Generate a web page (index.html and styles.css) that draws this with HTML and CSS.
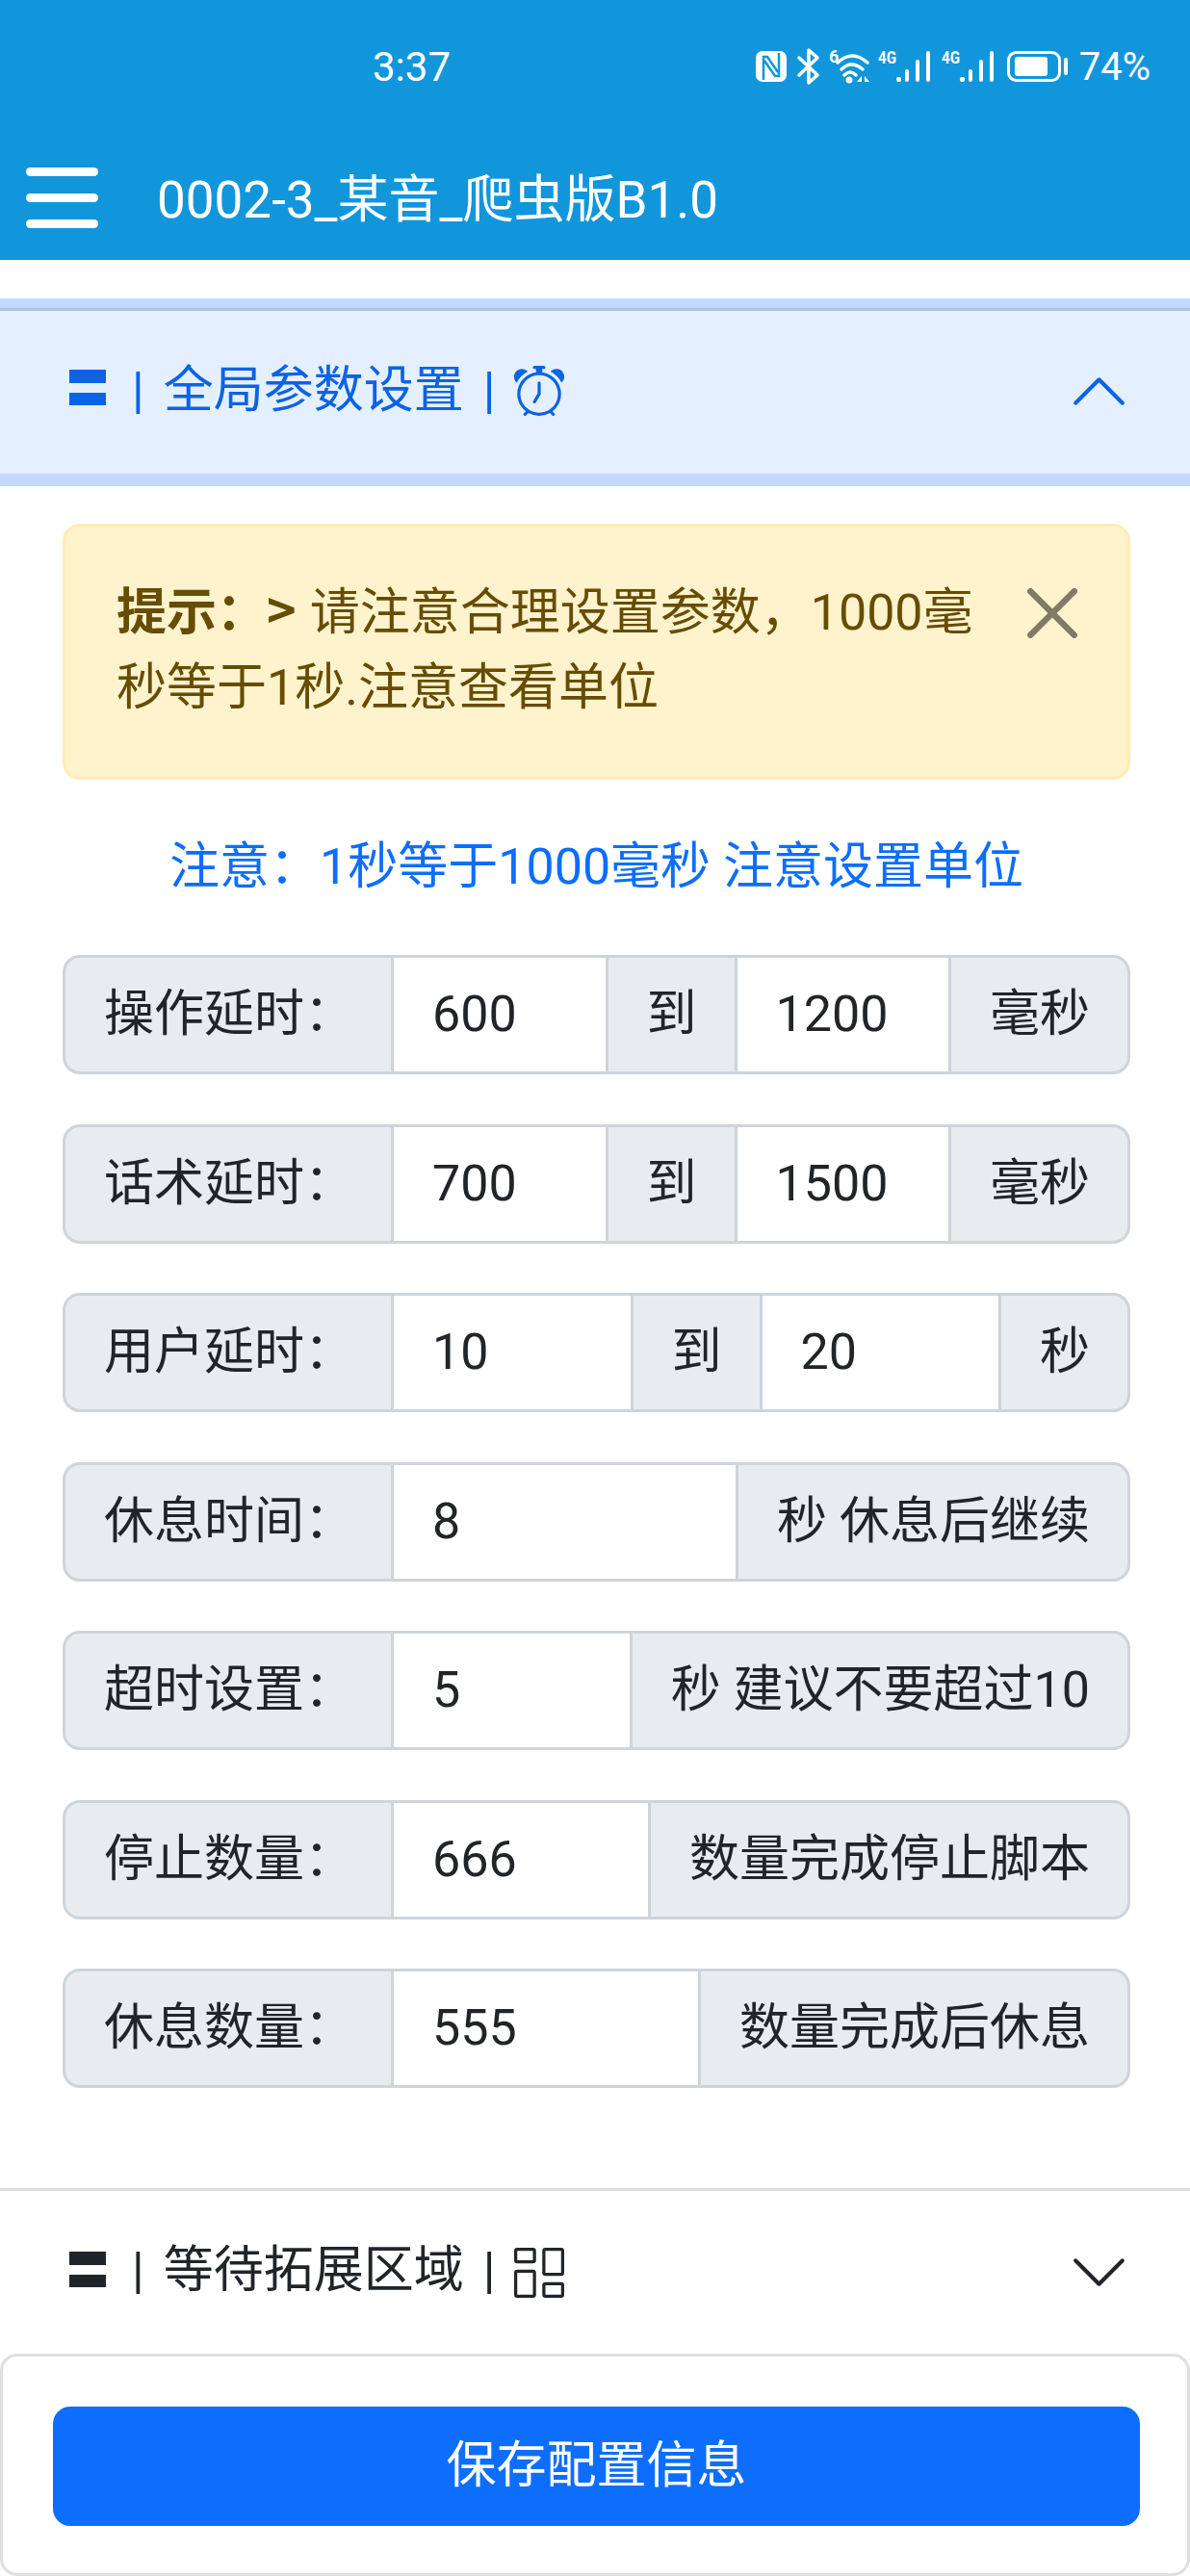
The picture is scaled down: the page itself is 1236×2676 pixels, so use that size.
FILE: index.html
```html
<!doctype html>
<html lang="zh-CN">
<head>
<meta charset="utf-8">
<title>0002-3_某音_爬虫版B1.0</title>
<link rel="stylesheet" href="styles.css">
</head>
<body>
<header class="appbar">
	<div class="statusbar">
		<span class="clock">3:37</span>
		<svg class="status-icons" width="330" height="50" viewBox="0 0 330 50">
			<rect x="4" y="8" width="32" height="32" rx="7" fill="#fff"/>
			<path d="M12 38V14h4l11 16M28 10v24h-4L13 18" fill="none" stroke="#1296db" stroke-width="2.500"/>
			<path d="M49 15l19 18-9 8V7l9 8-19 18" fill="none" stroke="#fff" stroke-width="3.500" stroke-linecap="round" stroke-linejoin="round"/>
			<text x="80" y="20" class="tiny">6</text>
			<g fill="none" stroke="#fff" stroke-width="3.500" stroke-linecap="round">
				<path d="M89 20q15-14 31 0"/>
				<path d="M93 27q10-10 22 0"/>
				<path d="M96 33q6-6 12 0"/>
			</g>
			<circle cx="101" cy="38" r="3.500" fill="#fff"/>
			<path d="M114 34v6h-5zM117 34l5 6h-5z" fill="#fff"/>
			<text x="131" y="21" class="tiny" textLength="19" lengthAdjust="spacingAndGlyphs">4G</text>
			<g fill="#fff">
				<rect x="150" y="35" width="5" height="5" rx="2"/>
				<rect x="159" y="27" width="4" height="13" rx="2"/>
				<rect x="170" y="17" width="4" height="23" rx="2"/>
				<rect x="181" y="8" width="4" height="32" rx="2"/>
			</g>
			<text x="197" y="21" class="tiny" textLength="19" lengthAdjust="spacingAndGlyphs">4G</text>
			<g fill="#fff">
				<rect x="216" y="35" width="5" height="5" rx="2"/>
				<rect x="225" y="27" width="4" height="13" rx="2"/>
				<rect x="236" y="17" width="4" height="23" rx="2"/>
				<rect x="247" y="8" width="4" height="32" rx="2"/>
			</g>
			<rect x="266.500" y="9.500" width="53" height="29" rx="8" fill="none" stroke="#fff" stroke-width="3"/>
			<rect x="273" y="14" width="34" height="20" rx="3" fill="#fff"/>
			<rect x="324" y="15" width="4" height="18" rx="2" fill="#fff"/>
		</svg>
		<span class="battery">74%</span>
	</div>
	<div class="titlebar">
		<div class="burger"><span></span><span></span><span></span></div>
		<span class="title">0002-3_某音_爬虫版B1.0</span>
	</div>
</header>

<section class="acc-head acc-open">
	<svg class="bars" viewBox="0 0 38 37"><rect width="38" height="14"/><rect y="24" width="38" height="13"/></svg>
	<span class="acc-text">|<span class="acc-name">全局参数设置</span>|</span>
	<svg class="bi" viewBox="0 0 16 16" fill="currentColor">
		<path d="M8.500 5.500a.5.5 0 0 0-1 0v3.362l-1.429 2.380a.5.5 0 1 0 .858.515l1.500-2.500A.5.5 0 0 0 8.500 9V5.500z"/>
		<path d="M6.500 0a.5.5 0 0 0 0 1H7v1.070a7.001 7.001 0 0 0-3.273 12.474l-.602.602a.5.5 0 0 0 .707.708l.746-.746A6.970 6.970 0 0 0 8 16a6.970 6.970 0 0 0 3.422-.892l.746.746a.5.5 0 0 0 .707-.708l-.601-.602A7.001 7.001 0 0 0 9 2.070V1h.5a.5.5 0 0 0 0-1h-3zm1.038 3.018a6.093 6.093 0 0 1 .924 0 6 6 0 1 1-.924 0zM0 3.500c0 .753.333 1.429.860 1.887A8.035 8.035 0 0 1 4.387 1.860 2.500 2.500 0 0 0 0 3.500zM13.500 1c-.753 0-1.429.333-1.887.860a8.035 8.035 0 0 1 3.527 3.527A2.500 2.500 0 0 0 13.500 1z"/>
	</svg>
	<svg class="chevron chevron-up" viewBox="0 0 16 16" fill="currentColor"><path d="M1.646 4.646a.5.5 0 0 1 .708 0L8 10.293l5.646-5.647a.5.5 0 0 1 .708.708l-6 6a.5.5 0 0 1-.708 0l-6-6a.5.5 0 0 1 0-.708z"/></svg>
</section>

<main class="acc-body">
	<div class="alert">
		<p class="alert-text"><strong class="alert-lead">提示：&gt;</strong>请注意合理设置参数，1000毫秒等于1秒.注意查看单位</p>
		<svg class="close" viewBox="0 0 16 16" fill="currentColor"><path d="M.293.293a1 1 0 0 1 1.414 0L8 6.586 14.293.293a1 1 0 1 1 1.414 1.414L9.414 8l6.293 6.293a1 1 0 0 1-1.414 1.414L8 9.414l-6.293 6.293a1 1 0 0 1-1.414-1.414L6.586 8 .293 1.707a1 1 0 0 1 0-1.414z"/></svg>
	</div>
	<p class="note">注意：1秒等于1000毫秒 注意设置单位</p>

	<div class="group">
		<span class="addon">操作延时：</span>
		<input class="field" type="text" value="600">
		<span class="addon">到</span>
		<input class="field" type="text" value="1200">
		<span class="addon">毫秒</span>
	</div>
	<div class="group">
		<span class="addon">话术延时：</span>
		<input class="field" type="text" value="700">
		<span class="addon">到</span>
		<input class="field" type="text" value="1500">
		<span class="addon">毫秒</span>
	</div>
	<div class="group">
		<span class="addon">用户延时：</span>
		<input class="field" type="text" value="10">
		<span class="addon">到</span>
		<input class="field" type="text" value="20">
		<span class="addon">秒</span>
	</div>
	<div class="group">
		<span class="addon">休息时间：</span>
		<input class="field" type="text" value="8">
		<span class="addon">秒 休息后继续</span>
	</div>
	<div class="group">
		<span class="addon">超时设置：</span>
		<input class="field" type="text" value="5">
		<span class="addon">秒 建议不要超过10</span>
	</div>
	<div class="group">
		<span class="addon">停止数量：</span>
		<input class="field" type="text" value="666">
		<span class="addon">数量完成停止脚本</span>
	</div>
	<div class="group">
		<span class="addon">休息数量：</span>
		<input class="field" type="text" value="555">
		<span class="addon">数量完成后休息</span>
	</div>
</main>

<section class="acc-head acc-closed">
	<svg class="bars" viewBox="0 0 38 37"><rect width="38" height="14"/><rect y="24" width="38" height="13"/></svg>
	<span class="acc-text">|<span class="acc-name">等待拓展区域</span>|</span>
	<svg class="bi" viewBox="0 0 16 16" fill="currentColor"><path d="M6 1v3H1V1h5zM1 0a1 1 0 0 0-1 1v3a1 1 0 0 0 1 1h5a1 1 0 0 0 1-1V1a1 1 0 0 0-1-1H1zm14 12v3h-5v-3h5zm-5-1a1 1 0 0 0-1 1v3a1 1 0 0 0 1 1h5a1 1 0 0 0 1-1v-3a1 1 0 0 0-1-1h-5zM6 8v7H1V8h5zM1 7a1 1 0 0 0-1 1v7a1 1 0 0 0 1 1h5a1 1 0 0 0 1-1V8a1 1 0 0 0-1-1H1zm14-6v7h-5V1h5zm-5-1a1 1 0 0 0-1 1v7a1 1 0 0 0 1 1h5a1 1 0 0 0 1-1V1a1 1 0 0 0-1-1h-5z"/></svg>
	<svg class="chevron" viewBox="0 0 16 16" fill="currentColor"><path d="M1.646 4.646a.5.5 0 0 1 .708 0L8 10.293l5.646-5.647a.5.5 0 0 1 .708.708l-6 6a.5.5 0 0 1-.708 0l-6-6a.5.5 0 0 1 0-.708z"/></svg>
</section>

<footer class="card">
	<button class="save" type="button">保存配置信息</button>
</footer>
</body>
</html>
```

FILE: styles.css
```css
* {
	box-sizing: border-box;
}
html, body {
	margin: 0;
	padding: 0;
}
body {
	width: 1236px;
	height: 2676px;
	overflow: hidden;
	background: #fff;
	color: #212529;
	font-family: Roboto, "Noto Sans CJK SC", sans-serif;
	font-size: 52px;
	line-height: 78px;
}

/* top bar */
.appbar {
	height: 270px;
	background: #1296db;
	color: #fff;
}
.statusbar {
	display: flex;
	align-items: center;
	height: 140px;
	padding: 0 41px 0 387px;
	font-size: 40px;
	line-height: 48px;
}
.clock {
	font-size: 42px;
}
.status-icons {
	margin-left: auto;
	margin-right: 10px;
}
.tiny {
	fill: #fff;
	font-family: Roboto, sans-serif;
	font-size: 18px;
	font-weight: 700;
}
.titlebar {
	display: flex;
	align-items: center;
	height: 130px;
	padding-left: 27px;
}
.burger {
	display: flex;
	flex-direction: column;
	gap: 18px;
	width: 75px;
}
.burger span {
	display: block;
	height: 9px;
	border-radius: 5px;
	background: #fff;
}
.title {
	margin: 6px 0 0 61px;
	font-size: 53px;
}

/* accordion heads */
.acc-head {
	display: flex;
	align-items: center;
	padding: 0 62px 0 72px;
}
.acc-open {
	height: 195px;
	margin-top: 40px;
	border-top: 10px solid #c2dafd;
	border-bottom: 13px solid #c2dafd;
	box-shadow: inset 0 3px 0 #aec4e4;
	background: #e4f0ff;
	color: #0c63e4;
}
.acc-closed {
	height: 172px;
	border-top: 3px solid #dfdfdf;
}
.bars {
	width: 38px;
	height: 37px;
	margin-bottom: 6px;
	fill: currentColor;
}
.acc-open .bars {
	margin-bottom: 7px;
}
.acc-text {
	margin: 0 0 3px 27px;
}
.acc-open .acc-text {
	margin-bottom: 1px;
}
.acc-name {
	margin: 0 20px;
}
.bi {
	width: 52px;
	height: 52px;
	margin-left: 20px;
}
.chevron {
	width: 65px;
	height: 65px;
	margin-left: auto;
}
.chevron-up {
	transform: rotate(180deg);
}

/* body */
.acc-body {
	height: 1768px;
	padding: 39px 62px 0 65px;
}
.alert {
	display: flex;
	align-items: flex-start;
	height: 266px;
	padding: 51px 52px 0 53px;
	border: 3px solid #ffecb5;
	border-radius: 18px;
	background: #fff3cd;
	color: #664d03;
}
.alert-text {
	flex: 1;
	margin: 0;
}
.alert-lead {
	margin-right: 14px;
	font-family: "Noto Sans CJK SC", sans-serif;
	line-height: 1;
}
.close {
	flex: none;
	width: 52px;
	height: 52px;
	margin: 13px 0 0 30px;
	color: #807a67;
}
.note {
	margin: 52px 0;
	color: #0d6efd;
	text-align: center;
}
.group {
	display: flex;
	height: 124px;
	margin-bottom: 51.500px;
}
.addon {
	display: flex;
	align-items: center;
	padding: 0 38px 0 40px;
	border: 3px solid #ced4da;
	background: #e9ecef;
	white-space: nowrap;
}
.addon:first-child {
	border-radius: 18px 0 0 18px;
}
.addon:last-child {
	border-radius: 0 18px 18px 0;
}
.field {
	flex: 1;
	min-width: 0;
	width: 1%;
	margin-left: -3px;
	padding: 0 40px;
	border: 3px solid #ced4da;
	background: #fff;
	color: #212529;
	font: inherit;
	outline: none;
}
.field + .addon {
	margin-left: -3px;
	padding: 0 39px 0 40px;
}

/* bottom card */
.card {
	height: 231px;
	padding: 52px 49px 0 52px;
	border: 3px solid #dfdfdf;
	border-radius: 18px;
}
.save {
	display: block;
	width: 100%;
	height: 124px;
	border: 0;
	border-radius: 18px;
	background: #0d6efd;
	color: #fff;
	font: inherit;
}
```
